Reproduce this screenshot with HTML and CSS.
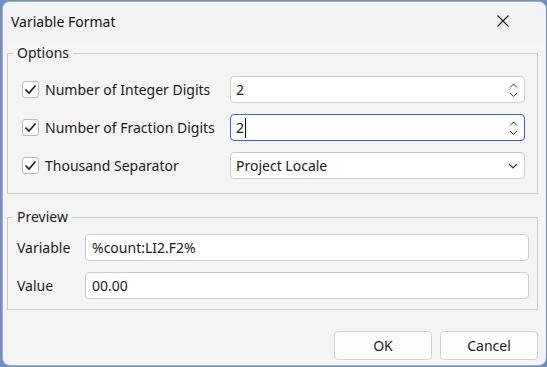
FILE: index.html
```html
<!DOCTYPE html>
<html lang="en">
<head>
    <meta charset="UTF-8">
    <title>Variable Format</title>
    <link rel="stylesheet" href="styles.css">
</head>
<body>
    <div class="window">
        <div class="titlebar">
            <span class="title">Variable Format</span>
            <span class="close">
                <svg width="12" height="12" viewBox="0 0 12 12"><path d="M0.5 0.5 L11.5 11.5 M11.5 0.5 L0.5 11.5" stroke="#1a1a1a" stroke-width="1.1" fill="none"/></svg>
            </span>
        </div>

        <div class="content">
            <fieldset class="group options">
                <legend>Options</legend>
                <div class="row">
                    <span class="check"><svg width="13" height="11" viewBox="0 0 13 11"><path d="M1.5 5.5 L5 9 L11.5 1.5" stroke="#1a1a1a" stroke-width="1.6" fill="none"/></svg></span>
                    <span class="label">Number of Integer Digits</span>
                    <div class="field">
                        <span class="value">2</span>
                        <span class="spin">
                            <svg width="9" height="16" viewBox="0 0 9 16"><path d="M1 5.5 L4.5 2 L8 5.5 M1 11 L4.5 14.5 L8 11" stroke="#333" stroke-width="1" fill="none"/></svg>
                        </span>
                    </div>
                </div>
                <div class="row">
                    <span class="check"><svg width="13" height="11" viewBox="0 0 13 11"><path d="M1.5 5.5 L5 9 L11.5 1.5" stroke="#1a1a1a" stroke-width="1.6" fill="none"/></svg></span>
                    <span class="label">Number of Fraction Digits</span>
                    <div class="field focused">
                        <span class="value">2<span class="caret"></span></span>
                        <span class="spin">
                            <svg width="9" height="16" viewBox="0 0 9 16"><path d="M1 5.5 L4.5 2 L8 5.5 M1 11 L4.5 14.5 L8 11" stroke="#333" stroke-width="1" fill="none"/></svg>
                        </span>
                    </div>
                </div>
                <div class="row">
                    <span class="check"><svg width="13" height="11" viewBox="0 0 13 11"><path d="M1.5 5.5 L5 9 L11.5 1.5" stroke="#1a1a1a" stroke-width="1.6" fill="none"/></svg></span>
                    <span class="label">Thousand Separator</span>
                    <div class="field">
                        <span class="value">Project Locale</span>
                        <span class="spin">
                            <svg width="10" height="6" viewBox="0 0 10 6"><path d="M1 1 L5 5 L9 1" stroke="#333" stroke-width="1.1" fill="none"/></svg>
                        </span>
                    </div>
                </div>
            </fieldset>

            <fieldset class="group preview">
                <legend>Preview</legend>
                <div class="row">
                    <span class="plabel">Variable</span>
                    <div class="field"><span class="value">%count:LI2.F2%</span></div>
                </div>
                <div class="row">
                    <span class="plabel">Value</span>
                    <div class="field"><span class="value">00.00</span></div>
                </div>
            </fieldset>

            <div class="buttons">
                <button>OK</button>
                <button>Cancel</button>
            </div>
        </div>
    </div>
</body>
</html>
```

FILE: styles.css
```css
body {
    margin: 0;
    height: 367px;
    overflow: hidden;
    background: #6f8fc2;
    font-family: 'Noto Sans', 'Open Sans', sans-serif;
    font-size: 14px;
    color: #1b1b1b;
}
.window {
    margin: 1px 0 0 2px;
    width: 543px;
    height: 363px;
    background: #f4f4f4;
    border: 1px solid #a9b0bd;
    border-right: none;
    border-radius: 8px 8px 8px 8px;
    overflow: hidden;
}
.titlebar {
    height: 42px;
    display: flex;
    align-items: center;
    justify-content: space-between;
    padding: 0 37px 0 8px;
    box-sizing: border-box;
    background: #f3f3f3;
}
.title {
    margin-top: -4px;
    color: #111;
}
.close {
    display: flex;
    margin-top: -4px;
}
.content {
    padding: 0 8px 0 4px;
}
.group {
    margin: 0;
    border: 1px solid #cacaca;
    line-height: 18px;
}
.group legend {
    padding: 0 4px;
    color: #222;
}
.options {
    padding: 14px 12px 14px 14px;
}
.options legend {
    margin-left: -9px;
}
.preview {
    margin-top: 14px;
    padding: 8px 8px 10px 9px;
}
.preview legend {
    margin-left: -4px;
}
.row {
    display: flex;
    align-items: center;
    height: 27px;
}
.row + .row {
    margin-top: 11px;
}
.check {
    width: 15px;
    height: 15px;
    border: 1px solid #b8b8b8;
    border-radius: 3px;
    background: #fff;
    display: flex;
    align-items: center;
    justify-content: center;
    margin-right: 6px;
}
.label {
    width: 185px;
}
.plabel {
    width: 68px;
}
.field {
    flex: 1;
    height: 27px;
    box-sizing: border-box;
    border: 1px solid #cdcdcd;
    border-radius: 4px;
    background: #fff;
    display: flex;
    align-items: center;
    justify-content: space-between;
    padding: 0 6px 0 5px;
}
.preview .field {
    padding-left: 6px;
}
.field.focused {
    border-color: #3a63d8;
}
.value {
    display: flex;
    align-items: center;
}
.caret {
    display: inline-block;
    width: 1px;
    height: 20px;
    background: #000;
    margin-left: 1px;
}
.spin {
    display: flex;
    align-items: center;
}
.buttons {
    display: flex;
    justify-content: flex-end;
    gap: 8px;
    margin-top: 21px;
}
button {
    width: 98px;
    height: 29px;
    font-family: inherit;
    font-size: 14px;
    color: #1b1b1b;
    background: #fdfdfd;
    border: 1px solid #d3d3d3;
    border-radius: 4px;
}
```
